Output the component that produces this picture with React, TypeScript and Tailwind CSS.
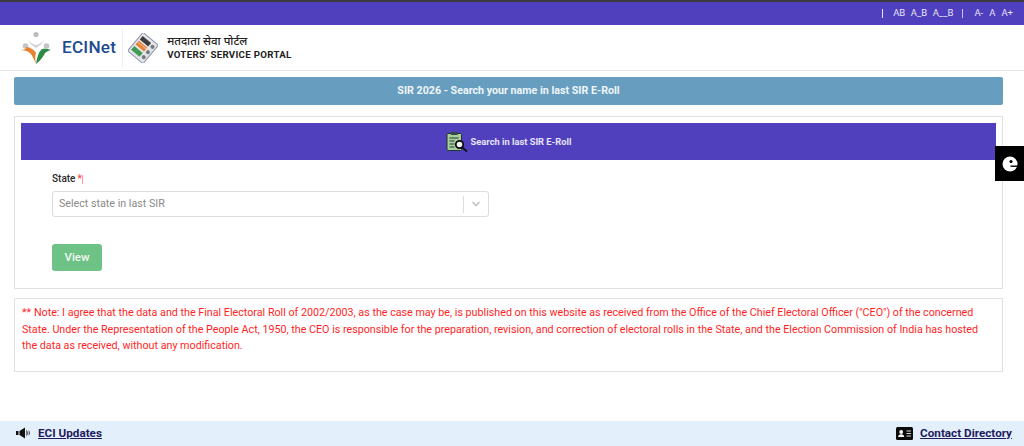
import React from "react";

function EciLogo() {
  return (
    <svg width="34" height="34" viewBox="0 0 34 34" className="shrink-0">
      <circle cx="17" cy="3.5" r="2.6" fill="#b9bcc0" />
      <path d="M8 6c2 6 5 9 9 11 4-2 7-5 9-11-2 5-5 7-9 8-4-1-7-3-9-8z" fill="#d3d5d8" />
      <circle cx="6.5" cy="15" r="2.8" fill="#c2c4c7" />
      <circle cx="27.5" cy="15" r="2.8" fill="#c2c4c7" />
      <path d="M1 19c4 0 8 1 10 3 2 2 4 6 6 11-1-5-1-8 0-11-3-5-8-6-10-6 1 2-2 3-6 3z" fill="#e8812f" />
      <path d="M17 33c1-6 2-11 5-14 2-2 6-1 10 0-3 1-6 2-7 5-2 3-4 6-8 9z" fill="#2e8b45" />
    </svg>
  );
}

function EvmLogo() {
  return (
    <svg width="30" height="30" viewBox="0 0 30 30" className="shrink-0">
      <g transform="rotate(40 15 15)">
        <rect x="5" y="3" width="20" height="24" fill="#e4e5ea" stroke="#8a90a8" strokeWidth="1" />
        <rect x="7" y="6" width="11" height="4.5" fill="#3d3d3d" />
        <rect x="7" y="12" width="11" height="1.5" fill="#e8812f" />
        <rect x="7" y="14" width="11" height="3" fill="#e8812f" />
        <rect x="7" y="19" width="11" height="5" fill="#3f9a52" />
        <circle cx="21.5" cy="8" r="2" fill="#77797d" />
        <circle cx="21.5" cy="15" r="2" fill="#77797d" />
        <circle cx="21.5" cy="21.5" r="2" fill="#77797d" />
      </g>
    </svg>
  );
}

function ClipboardIcon() {
  return (
    <svg width="22" height="22" viewBox="0 0 22 22" className="shrink-0">
      <rect x="1" y="2.5" width="14.5" height="17" rx="1" fill="#a6cf9f" stroke="#22352a" strokeWidth="1" />
      <rect x="5" y="1" width="6.5" height="3" fill="#3b4a40" />
      <path d="M3.5 7h9M3.5 10h5M3.5 13h5M3.5 16h5" stroke="#2c3b31" strokeWidth="1" />
      <circle cx="13.5" cy="13.5" r="3.7" fill="#f2f4f4" stroke="#0b0b0b" strokeWidth="1.8" />
      <path d="M16.3 16.3L21 20.6" stroke="#0b0b0b" strokeWidth="1.8" />
    </svg>
  );
}

function SpeakerIcon() {
  return (
    <svg width="15" height="12" viewBox="0 0 15 12" className="shrink-0">
      <path d="M0 4h2.5v4H0zM3.5 4L9 0.5v11L3.5 8z" fill="#111" />
      <path d="M10.5 2.5c1.6 2 1.6 5 0 7zM12.8 3c1.2 2 1.2 4 0 6z" fill="#111" />
    </svg>
  );
}

function ContactIcon() {
  return (
    <svg width="17" height="13" viewBox="0 0 17 13" className="shrink-0">
      <rect width="17" height="13" rx="1.5" fill="#0c0c0c" />
      <circle cx="5.2" cy="5" r="1.9" fill="#fff" />
      <path d="M2.2 10c0-2 1.3-2.8 3-2.8s3 .8 3 2.8z" fill="#fff" />
      <path d="M10.5 4h4.5M10.5 6.5h4.5M10.5 9h4.5" stroke="#d8d8d8" strokeWidth="1" />
    </svg>
  );
}

export default function App() {
  return (
    <div className="relative flex h-[446px] w-[1024px] flex-col overflow-hidden bg-white font-['Roboto',sans-serif]">
      <div className="h-[2px] bg-[#3b3b3f]" />
      <div className="flex h-[23px] items-center justify-end bg-[#5040bd] pr-[11px] text-[9.5px] text-[#e6e3f7]">
        <span className="mr-[10px] h-[9px] w-px bg-[#e6e3f7]" />
        <div className="flex items-center gap-[5.5px]">
          <span>AB</span>
          <span>A_B</span>
          <span>A__B</span>
        </div>
        <span className="ml-[9px] mr-[11px] h-[9px] w-px bg-[#c9c3ef]" />
        <div className="flex items-center gap-[6px]">
          <span>A-</span>
          <span>A</span>
          <span>A+</span>
        </div>
      </div>

      <header className="flex h-[46px] items-center border-b border-[#e4e6ea] pl-[19px]">
        <EciLogo />
        <span className="ml-[9px] text-[17.2px] font-medium tracking-[0.2px] text-[#1f4b8f]">ECINet</span>
        <span className="ml-[6px] h-[38px] w-px bg-[#eeeeee]" />
        <div className="ml-[5px] flex items-center">
          <EvmLogo />
          <div className="ml-[9px] flex flex-col">
            <span className="font-['Noto_Sans','Noto_Sans_CJK_SC',sans-serif] text-[11.5px] font-medium leading-[15px] text-[#222]">मतदाता सेवा पोर्टल</span>
            <span className="text-[9.7px] font-bold leading-[14px] tracking-[0.3px] text-[#222]">VOTERS’ SERVICE PORTAL</span>
          </div>
        </div>
      </header>

      <main className="flex flex-col pl-[14px] pr-[21px] pt-[6px]">
        <div className="flex h-[28px] items-center justify-center rounded-[2px] bg-[#679ebf] text-[10.7px] font-bold text-[#f0f5f9]">
          SIR 2026 - Search your name in last SIR E-Roll
        </div>

        <section className="mt-[11px] h-[173px] border border-[#dfe1e5] px-[6px] pt-[6px]">
          <div className="flex h-[37px] items-center justify-center gap-[3px] bg-[#5040bd] text-[9.3px] font-bold text-[#e6e3f7]">
            <ClipboardIcon />
            <span>Search in last SIR E-Roll</span>
          </div>
          <div className="ml-[31px] mt-[13px] flex items-center text-[10px] font-medium leading-[12px] text-[#2a2a2a]">
            State
            <span className="ml-[2px] text-[#f44]">*</span>
            <span className="h-[9px] w-px bg-[#f99]" />
          </div>
          <div className="ml-[31px] mt-[6px] flex h-[26px] w-[437px] items-center rounded-[3px] border border-[#dcdcdc] pl-[6px] text-[10.7px] text-[#8a8a8a]">
            <span className="flex-1">Select state in last SIR</span>
            <span className="h-[17px] w-px bg-[#dcdcdc]" />
            <svg width="24" height="12" viewBox="0 0 24 12" className="shrink-0">
              <path d="M8.5 4l3.5 3.5L15.5 4" fill="none" stroke="#c4c4c4" strokeWidth="1.7" />
            </svg>
          </div>
          <button className="ml-[31px] mt-[27px] flex h-[27px] w-[50px] items-center justify-center rounded-[3px] bg-[#6fc286] text-[11.5px] font-medium text-[#eef8f1]">
            View
          </button>
        </section>

        <section className="mt-[9px] h-[74px] border border-[#dfe1e5] pl-[7px] pr-[18px] pt-[6px] text-[10.72px] leading-[16.5px] text-[#ff1f1f]">
          ** Note: I agree that the data and the Final Electoral Roll of 2002/2003, as the case may be, is published on this website as received from the Office of the Chief Electoral Officer ("CEO") of the concerned State. Under the Representation of the People Act, 1950, the CEO is responsible for the preparation, revision, and correction of electoral rolls in the State, and the Election Commission of India has hosted the data as received, without any modification.
        </section>
      </main>

      <footer className="mt-auto flex h-[25px] items-center justify-between bg-[#e3f0fb] pl-[16px] pr-[12px] text-[11.7px] font-bold text-[#1f1b5e]">
        <div className="flex items-center gap-[7px]">
          <SpeakerIcon />
          <a className="underline">ECI Updates</a>
        </div>
        <div className="flex items-center gap-[7px]">
          <ContactIcon />
          <a className="underline">Contact Directory</a>
        </div>
      </footer>

      <div className="absolute right-0 top-[146px] flex h-[35px] w-[29px] items-center justify-center bg-black">
        <svg width="18" height="16" viewBox="0 0 18 16">
          <circle cx="9" cy="8" r="7.5" fill="#fff" />
          <circle cx="10" cy="5.5" r="1.6" fill="#000" />
          <path d="M9.5 9.5H17v1.4H9.5z" fill="#000" />
        </svg>
      </div>
    </div>
  );
}
